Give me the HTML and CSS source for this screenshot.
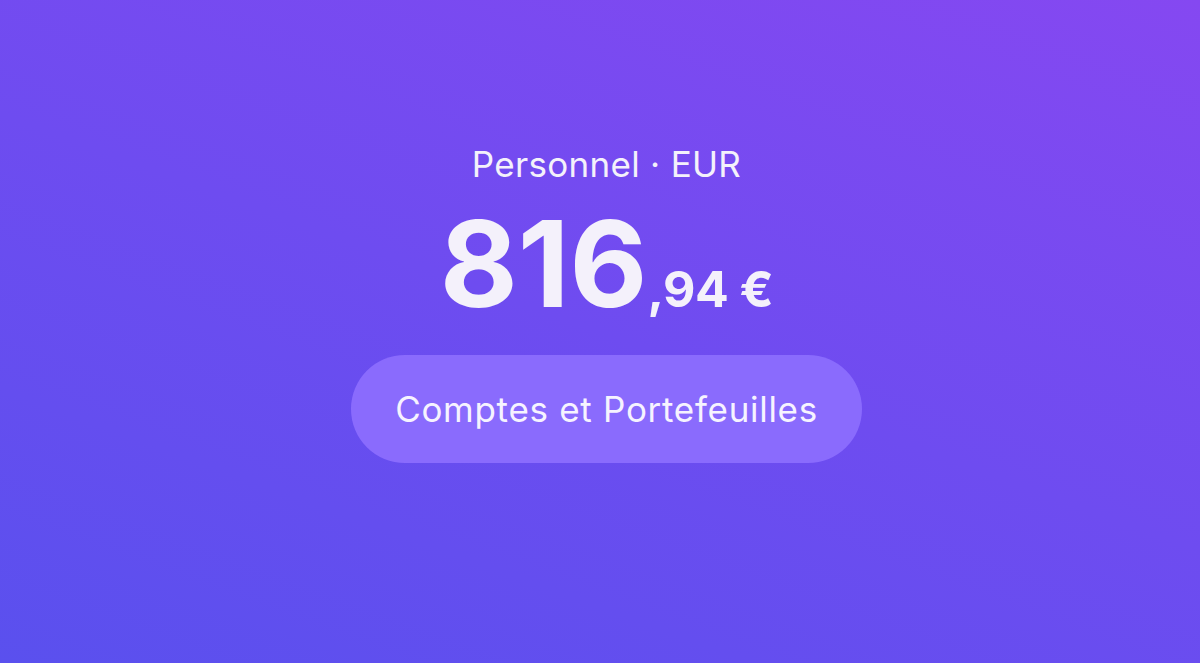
FILE: index.html
```html
<!DOCTYPE html>
<html lang="fr">
<head>
    <meta charset="UTF-8">
    <meta name="viewport" content="width=device-width, initial-scale=1.0">
    <title>Personnel</title>
    <link rel="stylesheet" href="styles.css">
</head>
<body>
    <div class="balance-screen">
        <div class="account-label">Personnel · EUR</div>
        <div class="balance">
            <span class="balance-int">816</span><span class="balance-dec">,94 €</span>
        </div>
        <button class="wallets-btn">Comptes et Portefeuilles</button>
    </div>
</body>
</html>
```

FILE: styles.css
```css
html, body {
    margin: 0;
    height: 100%;
}

body {
    font-family: Inter, 'Noto Sans', sans-serif;
    background: linear-gradient(200deg, #8548f1 0%, #6e4cf0 50%, #5a50ee 100%);
    color: #f4f1fb;
}

.balance-screen {
    display: flex;
    flex-direction: column;
    align-items: center;
    padding-top: 142px;
    padding-left: 13px;
}

.account-label {
    font-size: 35px;
    line-height: 44px;
    letter-spacing: 0.3px;
}

.balance {
    margin-top: 18px;
    font-weight: 700;
    line-height: 1;
    white-space: nowrap;
}

.balance-int {
    font-size: 120px;
    letter-spacing: 0;
}

.balance-dec {
    font-size: 50px;
    letter-spacing: -0.5px;
}

.wallets-btn {
    margin-top: 31px;
    width: 511px;
    height: 108px;
    border: none;
    border-radius: 54px;
    background-color: #8a6bfd;
    color: #f6f3ff;
    font-family: Inter, 'Noto Sans', sans-serif;
    font-size: 35px;
    letter-spacing: 0.7px;
    cursor: pointer;
}
```
